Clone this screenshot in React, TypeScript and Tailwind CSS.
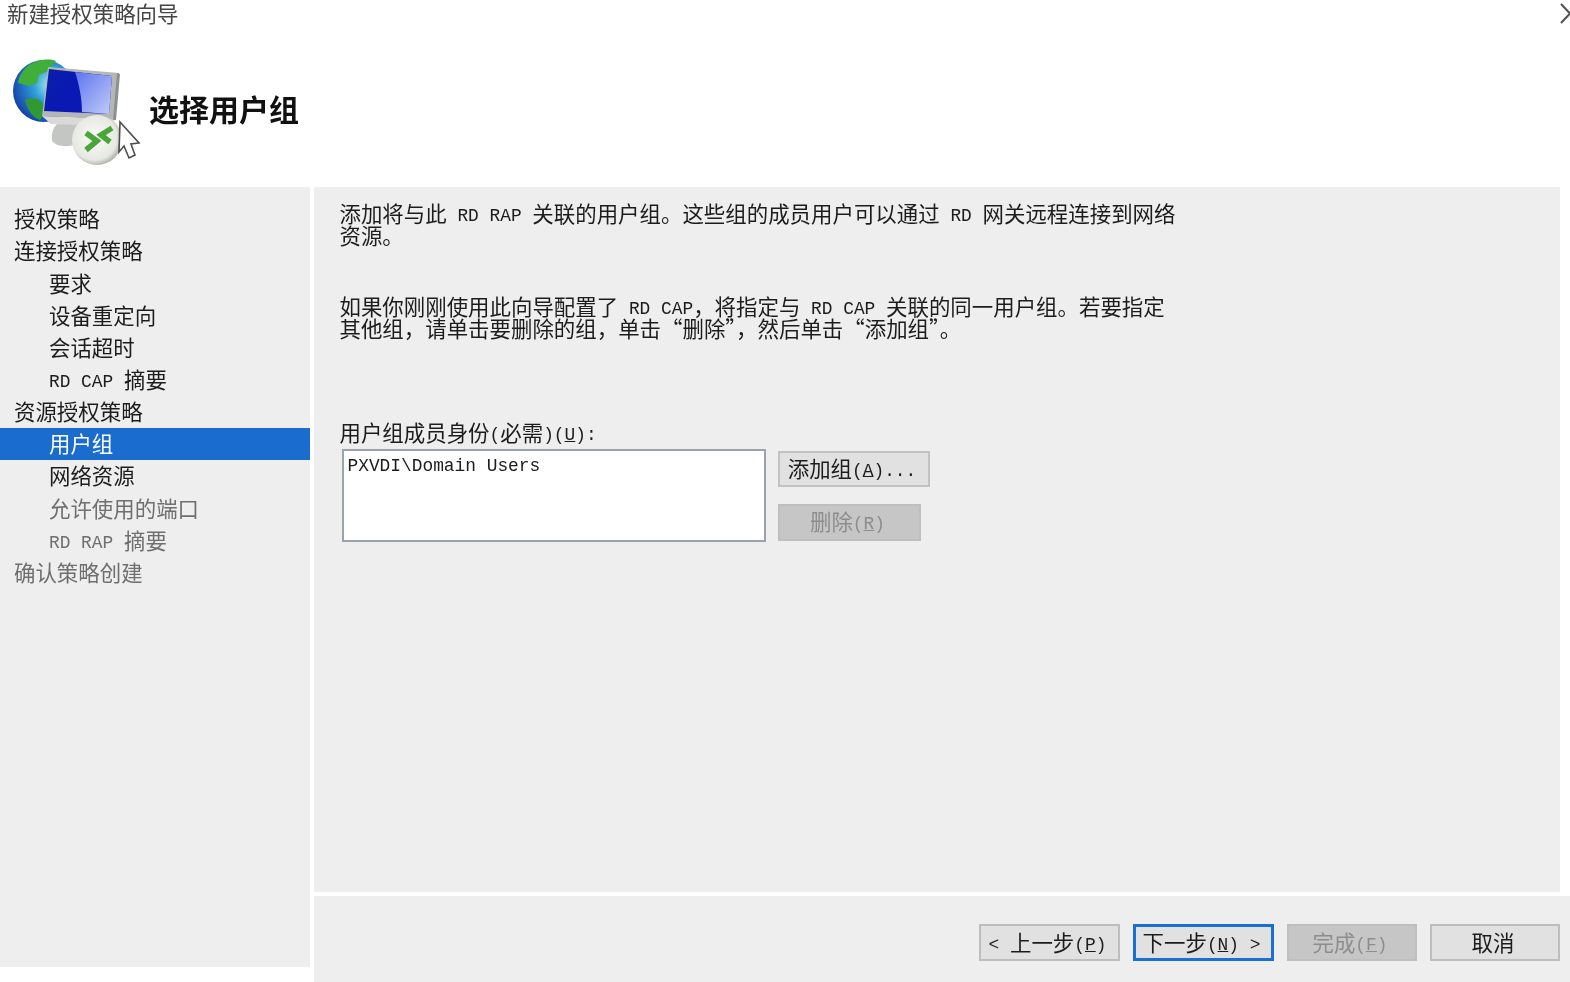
import React from 'react';

const CJK = 'font-["Noto_Sans_CJK_SC","Noto_Sans",sans-serif]';

// half-width runs of the dialog font
const M: React.FC<{ children: React.ReactNode }> = ({ children }) => (
  <span className='font-["Liberation_Mono",monospace] text-[17.85px] leading-[0] align-[1.5px] whitespace-pre'>{children}</span>
);

const NAV = [
  { label: <>授权策略</>, indent: false, tone: 'text-[#1c1c1c]' },
  { label: <>连接授权策略</>, indent: false, tone: 'text-[#1c1c1c]' },
  { label: <>要求</>, indent: true, tone: 'text-[#1c1c1c]' },
  { label: <>设备重定向</>, indent: true, tone: 'text-[#1c1c1c]' },
  { label: <>会话超时</>, indent: true, tone: 'text-[#1c1c1c]' },
  { label: <><M>RD CAP </M>摘要</>, indent: true, tone: 'text-[#1c1c1c]' },
  { label: <>资源授权策略</>, indent: false, tone: 'text-[#1c1c1c]' },
  { label: <>用户组</>, indent: true, tone: 'bg-[#1a6ccf] text-white' },
  { label: <>网络资源</>, indent: true, tone: 'text-[#1c1c1c]' },
  { label: <>允许使用的端口</>, indent: true, tone: 'text-[#6f6f6f]' },
  { label: <><M>RD RAP </M>摘要</>, indent: true, tone: 'text-[#6f6f6f]' },
  { label: <>确认策略创建</>, indent: false, tone: 'text-[#6f6f6f]' },
];

const WizardIcon: React.FC = () => (
  <svg className="shrink-0 blur-[0.6px]" width="150" height="120" viewBox="0 50 150 120">
    <defs>
      <radialGradient id="globe" cx="0.62" cy="0.4" r="0.72">
        <stop offset="0" stopColor="#b6f0f6" />
        <stop offset="0.4" stopColor="#2f9ed6" />
        <stop offset="0.8" stopColor="#1b55b4" />
        <stop offset="1" stopColor="#0f2f8c" />
      </radialGradient>
      <linearGradient id="screen" x1="0" y1="0" x2="1" y2="0.5">
        <stop offset="0" stopColor="#0a1fa8" />
        <stop offset="0.55" stopColor="#0a18b4" />
      </linearGradient>
      <linearGradient id="glare" x1="0" y1="0" x2="1" y2="1">
        <stop offset="0" stopColor="#5d74ee" />
        <stop offset="1" stopColor="#c3cdf8" />
      </linearGradient>
      <radialGradient id="badge" cx="0.45" cy="0.45" r="0.6">
        <stop offset="0" stopColor="#fbfbf8" />
        <stop offset="0.75" stopColor="#e6e8e1" />
        <stop offset="1" stopColor="#9da09a" />
      </radialGradient>
    </defs>
    <circle cx="44" cy="91" r="31" fill="url(#globe)" />
    <path d="M28 66c7-6 20-8 28-5l-8 10-9 4-2 8-8 3-11-3c1-7 5-13 10-17z" fill="#3fae3a" />
    <path d="M25 100c7-4 16-1 19 5 1 6-1 11-4 15-8-3-13-11-15-20z" fill="#2f9a34" />
    <path d="M57 124h20v19c-8 5-20 4-25-2-1-7 1-13 5-17z" fill="#c4c6c4" />
    <path d="M48 67l71 6-4 47-73-4z" fill="#b4b7b6" />
    <path d="M117 73l3 1-4 46-3 0z" fill="#8c908f" />
    <path d="M49 69l63 7-3 38-65-3z" fill="url(#screen)" />
    <path d="M75 72l37 4-3 38-27-2c0-14-3-28-7-40z" fill="url(#glare)" />
    <path d="M42 116l73 4-6 6-58-2z" fill="#d9dad8" />
    <circle cx="97" cy="140" r="25" fill="url(#badge)" />
    <path d="M86 133l11 8-11 9" fill="none" stroke="#4aa63a" strokeWidth="5.5" />
    <path d="M112 128l-11 7 9 7" fill="none" stroke="#4aa63a" strokeWidth="5.5" />
    <path d="M120 122l19 21-8 1 4 11-6 3-5-12-5 6z" fill="#fdfdfd" stroke="#4d4d4d" strokeWidth="1.6" />
  </svg>
);

const Btn: React.FC<{ className: string; children: React.ReactNode }> = ({ className, children }) => (
  <div className={`flex items-center justify-center leading-none ${className}`}>{children}</div>
);

export default function App() {
  return (
    <div className={`w-[1570px] h-[982px] bg-white flex flex-col overflow-hidden text-[21.45px] leading-[21.5px] text-[#1c1c1c] blur-[0.5px] ${CJK}`}>
      {/* Title bar */}
      <div className="h-[28px] flex justify-between pl-[7px] pt-[2px] text-[#454545]">
        <div className="whitespace-nowrap">新建授权策略向导</div>
        <svg className="-mt-[2px]" width="10" height="28" viewBox="0 0 10 28">
          <path d="M1 4l9 9.5L1 23" fill="none" stroke="#505050" strokeWidth="2" />
        </svg>
      </div>

      {/* Wizard header */}
      <div className="h-[159px] pt-[22px] flex items-start">
        <WizardIcon />
        <div className="h-[120px] flex items-center -ml-[1px] pb-[2px] text-[30px] font-bold text-[#111111]">选择用户组</div>
      </div>

      <div className="flex-1 flex gap-[4px]">
        {/* Steps */}
        <nav className="w-[309.5px] h-[780px] shrink-0 bg-[#eeeeee] pt-[16px]">
          {NAV.map((n, i) => (
            <div key={i} className={`h-[32.15px] flex items-center pb-[2px] ${n.indent ? 'pl-[49px]' : 'pl-[14px]'} ${n.tone}`}>
              <span>{n.label}</span>
            </div>
          ))}
        </nav>

        <div className="flex-1 flex flex-col gap-[4px]">
          {/* Page body */}
          <main className="w-[1246px] h-[705px] bg-[#eeeeee] pl-[26px] pt-[15px]">
            <p>
              添加将与此<M> RD RAP </M>关联的用户组。这些组的成员用户可以通过<M> RD </M>网关远程连接到网络
              <br />
              资源。
            </p>
            <p className="mt-[50px]">
              如果你刚刚使用此向导配置了<M> RD CAP</M>，将指定与<M> RD CAP </M>关联的同一用户组。若要指定
              <br />
              其他组，请单击要删除的组，单击“删除”，然后单击“添加组”。
            </p>
            <div className="mt-[83px]">
              用户组成员身份<M>(</M>必需<M>)(<span className="underline">U</span>):</M>
            </div>
            <div className="mt-[6px] flex items-start gap-[12px] pl-[2px]">
              <div className="w-[424px] h-[93px] bg-white border-2 border-[#9aa2ac] pl-[4px] pt-[1px]">
                <M>PXVDI\Domain Users</M>
              </div>
              <div className="pt-[2px] flex flex-col gap-[17px]">
                <Btn className="w-[152px] h-[36px] bg-[#e1e1e1] border-2 border-[#c2c2c2] pb-[2px] pr-[3px]">
                  <span>添加组<M>(<span className="underline">A</span>)...</M></span>
                </Btn>
                <Btn className="w-[143px] h-[37px] bg-[#c6c6c6] border-2 border-[#bfbfbf] text-[#8d8d8d] pb-[2px] pr-[3px]">
                  <span>删除<M>(<span className="underline">R</span>)</M></span>
                </Btn>
              </div>
            </div>
          </main>

          {/* Wizard buttons */}
          <footer className="flex-1 bg-[#eeeeee] flex justify-end items-start gap-[13px] pt-[28px] pr-[10px]">
            <Btn className="w-[141px] h-[37px] bg-[#e1e1e1] border-2 border-[#bdbdbd] pb-[1px] pr-[4px]">
              <span><M>&lt; </M>上一步<M>(<span className="underline">P</span>)</M></span>
            </Btn>
            <Btn className="w-[141px] h-[37px] bg-[#e1e1e1] border-[3px] border-[#1a6fd0] pb-[1px] pr-[4px]">
              <span>下一步<M>(<span className="underline">N</span>) &gt;</M></span>
            </Btn>
            <Btn className="w-[130px] h-[37px] bg-[#c6c6c6] border-2 border-[#bfbfbf] text-[#8d8d8d] pb-[1px] pr-[4px]">
              <span>完成<M>(<span className="underline">F</span>)</M></span>
            </Btn>
            <Btn className="w-[130px] h-[37px] bg-[#e1e1e1] border-2 border-[#bdbdbd] pb-[1px] pr-[4px]">取消</Btn>
          </footer>
        </div>
      </div>
    </div>
  );
}
